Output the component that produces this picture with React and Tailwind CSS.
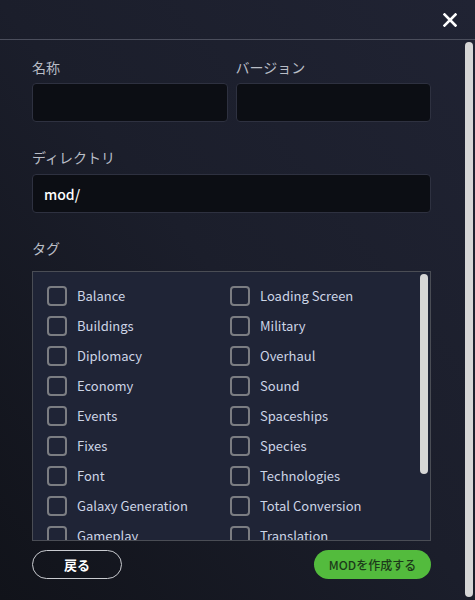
import { useState } from "react";

const leftTags = [
  "Balance",
  "Buildings",
  "Diplomacy",
  "Economy",
  "Events",
  "Fixes",
  "Font",
  "Galaxy Generation",
  "Gameplay",
  "Government",
  "Graphics",
  "Leaders",
];

const rightTags = [
  "Loading Screen",
  "Military",
  "Overhaul",
  "Sound",
  "Spaceships",
  "Species",
  "Technologies",
  "Total Conversion",
  "Translation",
  "Utilities",
];

function TagItem({ name, checked, onToggle }) {
  return (
    <label className="flex items-center h-[30px] gap-[10px] cursor-pointer">
      <span className="w-[20px] h-[20px] shrink-0 rounded-[4px] border-2 border-[#7b7d82]">
        {checked && <span className="block w-full h-full bg-[#55bb3f]" />}
      </span>
      <input type="checkbox" className="hidden" checked={checked} onChange={onToggle} />
      <span className="text-[13px] leading-[18px] text-[#cdd5e6] whitespace-nowrap">{name}</span>
    </label>
  );
}

export default function App() {
  const [name, setName] = useState("");
  const [version, setVersion] = useState("");
  const [dir, setDir] = useState("mod/");
  const [tags, setTags] = useState([]);

  const toggle = (t) =>
    setTags((prev) => (prev.includes(t) ? prev.filter((x) => x !== t) : [...prev, t]));

  const rows = Math.max(leftTags.length, rightTags.length);

  return (
    <div
      className="w-[475px] h-[600px] flex flex-col bg-gradient-to-tr from-[#11131a] via-[#1b1e2b] to-[#202333] text-white overflow-hidden"
      style={{ fontFamily: '"Noto Sans CJK JP", "Noto Sans", sans-serif' }}
    >
      {/* header */}
      <div className="h-[40px] shrink-0 flex items-center justify-end pr-[18px] border-b border-[#4b4e5c]">
        <button className="w-[14px] h-[14px] flex items-center justify-center">
          <svg width="14" height="14" viewBox="0 0 14 14">
            <path d="M1.5 1.5 L12.5 12.5 M12.5 1.5 L1.5 12.5" stroke="white" strokeWidth="2.6" strokeLinecap="square" />
          </svg>
        </button>
      </div>

      {/* body + scrollbar */}
      <div className="flex-1 flex min-h-0">
        <div className="flex-1 overflow-hidden px-8 pt-4">
          <div className="flex gap-2">
            <div className="flex-1">
              <div className="h-[22px] leading-[22px] text-[14px] text-[#b9bdc6] mb-[5px]">名称</div>
              <input
                value={name}
                onChange={(e) => setName(e.target.value)}
                className="w-full h-[39px] px-[11px] rounded-[4px] bg-[#0c0e14] border border-[#2e3140] text-[14px] text-white outline-none"
              />
            </div>
            <div className="flex-1">
              <div className="h-[22px] leading-[22px] text-[14px] text-[#b9bdc6] mb-[5px]">バージョン</div>
              <input
                value={version}
                onChange={(e) => setVersion(e.target.value)}
                className="w-full h-[39px] px-[11px] rounded-[4px] bg-[#0c0e14] border border-[#2e3140] text-[14px] text-white outline-none"
              />
            </div>
          </div>

          <div className="mt-6">
            <div className="h-[22px] leading-[22px] text-[14px] text-[#b9bdc6] mb-[6px]">ディレクトリ</div>
            <input
              value={dir}
              onChange={(e) => setDir(e.target.value)}
              className="w-full h-[39px] px-[11px] rounded-[4px] bg-[#0c0e14] border border-[#2e3140] text-[14px] font-medium text-white outline-none"
            />
          </div>

          <div className="mt-6">
            <div className="h-[22px] leading-[22px] text-[14px] text-[#b9bdc6] mb-[12px]">タグ</div>
            <div className="h-[270px] flex border border-[#4a4d55] bg-[#1f2436]">
              <div className="flex-1 overflow-hidden">
                <div className="grid grid-cols-2 pl-[14px] pr-[5px] pt-[9px]">
                  {Array.from({ length: rows }).map((_, i) => [
                    leftTags[i] ? (
                      <TagItem key={"l" + i} name={leftTags[i]} checked={tags.includes(leftTags[i])} onToggle={() => toggle(leftTags[i])} />
                    ) : (
                      <div key={"l" + i} />
                    ),
                    rightTags[i] ? (
                      <TagItem key={"r" + i} name={rightTags[i]} checked={tags.includes(rightTags[i])} onToggle={() => toggle(rightTags[i])} />
                    ) : (
                      <div key={"r" + i} />
                    ),
                  ])}
                </div>
              </div>
              <div className="w-[12px] shrink-0 pt-[2px] pl-[2px]">
                <div className="w-[8px] h-[200px] rounded-full bg-[#d6d6d6]" />
              </div>
            </div>
          </div>

          <div className="flex justify-between mt-[9px]">
            <button className="w-[90px] h-[29px] rounded-full border border-[#c9cbd0] text-[13px] leading-[18px] font-bold text-white">
              戻る
            </button>
            <button className="w-[117px] h-[29px] rounded-full bg-[#53bb3d] text-[12px] leading-[16px] font-medium text-[#1c3a1a]">
              MODを作成する
            </button>
          </div>
        </div>

        <div className="w-[12px] shrink-0 pt-[2px] pl-[2px]">
          <div className="w-[8px] h-[555px] rounded-full bg-[#d6d6d6]" />
        </div>
      </div>
    </div>
  );
}
